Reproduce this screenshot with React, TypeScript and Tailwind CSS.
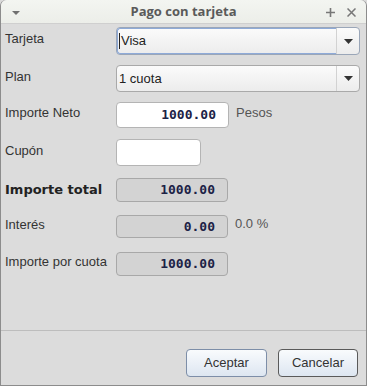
import React from "react";

const sans = { fontFamily: '"Liberation Sans", Arial, sans-serif' };
const mono = { fontFamily: '"DejaVu Sans Mono", "Liberation Mono", monospace' };

function Combo({ value, focused }: { value: string; focused?: boolean }) {
  return (
    <div
      className={
        "flex flex-1 items-stretch rounded-[4px] border bg-gradient-to-b from-[#fbfbfb] to-[#ececec] " +
        (focused ? "border-[#9aa6b8]" : "border-[#a9a9a9]")
      }
    >
      <div
        className={
          "flex flex-1 items-center pl-[1px] text-[13px] text-[#222] " +
          (focused ? "rounded-l-[3px] border-y border-l border-[#8eaad8]" : "pl-[2px]")
        }
        style={sans}
      >
        {focused && <span className="mr-[1px] inline-block h-[16px] w-[1px] bg-[#222]" />}
        {value}
      </div>
      <div className="flex w-[23px] items-center justify-center border-l border-[#d2d2d2]">
        <svg width="9" height="5" viewBox="0 0 9 5">
          <path d="M0 0 L9 0 L4.5 5 Z" fill="#333" />
        </svg>
      </div>
    </div>
  );
}

function Field({ value, w, gray }: { value: string; w: string; gray?: boolean }) {
  return (
    <div
      className={
        "flex h-full items-center justify-end rounded-[4px] border pr-[12px] text-[13px] font-bold text-[#1c2246] " +
        w +
        (gray ? " border-[#a8a8a8] bg-[#d3d3d3]" : " border-[#b4b4b4] bg-white")
      }
      style={mono}
    >
      {value}
    </div>
  );
}

function Row({
  label,
  bold,
  h,
  mt,
  children,
  suffix,
}: {
  label: string;
  bold?: boolean;
  h: string;
  mt: string;
  children: React.ReactNode;
  suffix?: string;
}) {
  return (
    <div className={"flex items-stretch " + h + " " + mt}>
      <div
        className={
          "flex w-[115px] shrink-0 items-center pl-[4px] " +
          (bold ? "text-[13px] font-bold text-[#222]" : "text-[13px] text-[#333]")
        }
        style={bold ? { fontFamily: '"DejaVu Sans", sans-serif' } : sans}
      >
        <span className={bold ? "-mt-[1px]" : "-mt-[4px]"}>{label}</span>
      </div>
      {children}
      {suffix && (
        <div className="ml-[7px] -mt-[5px] flex items-center text-[13px] text-[#555]" style={sans}>
          {suffix}
        </div>
      )}
    </div>
  );
}

export default function App() {
  return (
    <div className="h-[386px] w-[367px] overflow-hidden bg-[#dadada]">
      <div className="flex h-[386px] w-[367px] flex-col rounded-t-[6px] border-x border-b border-[#8c8c8c] bg-[#dcdcdc]">
        <div className="relative flex h-[24px] shrink-0 items-center justify-center rounded-t-[6px] border-b border-[#cfcfcf] bg-gradient-to-b from-[#f3f5f1] to-[#eceee9]">
          <svg className="absolute left-[11px] top-[11px]" width="8" height="4" viewBox="0 0 8 4">
            <path d="M0 0 L8 0 L4 4 Z" fill="#707070" />
          </svg>
          <span className="text-[13px] font-bold text-[#5a5a5a]" style={{ fontFamily: '"Open Sans", sans-serif' }}>
            Pago con tarjeta
          </span>
          <svg className="absolute left-[325px] top-[8px]" width="9" height="9" viewBox="0 0 9 9">
            <path d="M4.5 0 V9 M0 4.5 H9" stroke="#777" strokeWidth="1.6" />
          </svg>
          <svg className="absolute left-[346px] top-[8px]" width="9" height="9" viewBox="0 0 9 9">
            <path d="M0.5 0.5 L8.5 8.5 M8.5 0.5 L0.5 8.5" stroke="#777" strokeWidth="1.5" />
          </svg>
        </div>

        <div className="flex flex-col pr-[6px]">
          <Row label="Tarjeta" h="h-[28px]" mt="mt-[3px]">
            <Combo value="Visa" focused />
          </Row>
          <Row label="Plan" h="h-[27px]" mt="mt-[10px]">
            <Combo value="1 cuota" />
          </Row>
          <Row label="Importe Neto" h="h-[26px]" mt="mt-[10px]" suffix="Pesos">
            <Field value="1000.00" w="w-[113px]" />
          </Row>
          <Row label="Cupón" h="h-[27px]" mt="mt-[11px]">
            <Field value="" w="w-[85px]" />
          </Row>
          <Row label="Importe total" bold h="h-[24px]" mt="mt-[12px]">
            <Field value="1000.00" w="w-[112px]" gray />
          </Row>
          <Row label="Interés" h="h-[23px]" mt="mt-[13px]" suffix="0.0 %">
            <Field value="0.00" w="w-[112px]" gray />
          </Row>
          <Row label="Importe por cuota" h="h-[24px]" mt="mt-[14px]">
            <Field value="1000.00" w="w-[112px]" gray />
          </Row>
        </div>

        <div className="mt-[54px] border-t border-[#bdbdbd]" />

        <div className="mt-[18px] flex justify-end gap-[11px] pr-[8px]">
          <button
            className="h-[28px] w-[81px] rounded-[4px] border border-[#7d8ea8] bg-gradient-to-b from-[#f9fbfd] to-[#dde6f1] text-[13px] text-[#333]"
            style={sans}
          >
            Aceptar
          </button>
          <button
            className="h-[28px] w-[80px] rounded-[4px] border border-[#5a5a5a] bg-gradient-to-b from-[#f9fbfd] to-[#dde6f1] text-[13px] text-[#333]"
            style={sans}
          >
            Cancelar
          </button>
        </div>
      </div>
    </div>
  );
}
